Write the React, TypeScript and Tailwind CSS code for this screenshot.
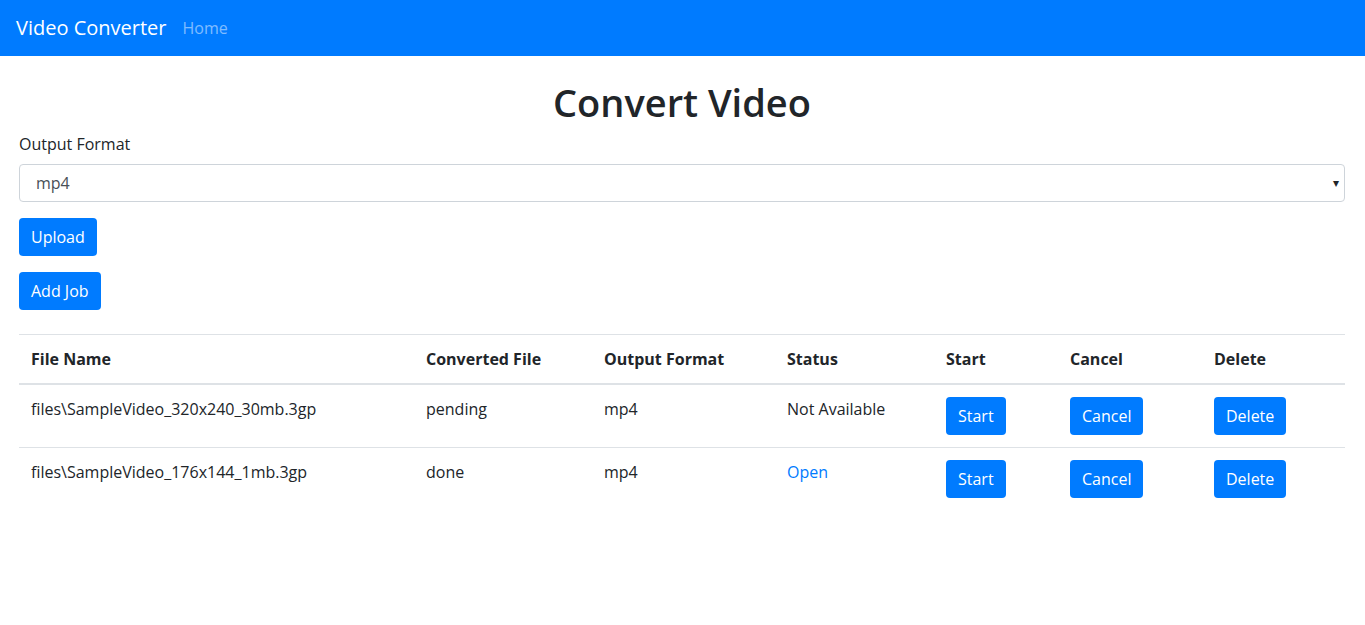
import React from 'react';

interface Job {
  fileName: string;
  converted: string;
  format: string;
  open: boolean;
}

const jobs: Job[] = [
  { fileName: 'files\\SampleVideo_320x240_30mb.3gp', converted: 'pending', format: 'mp4', open: false },
  { fileName: 'files\\SampleVideo_176x144_1mb.3gp', converted: 'done', format: 'mp4', open: true },
];

const btn =
  'h-[38px] px-3 rounded-[4px] bg-[#007bff] text-white text-base leading-6 hover:bg-[#0069d9]';

const App: React.FC = () => {
  return (
    <div className="min-h-screen bg-white text-[#212529] font-['Open_Sans',sans-serif] text-base leading-6">
      <nav className="h-14 bg-[#007bff] flex items-center px-4">
        <a className="text-white text-xl mr-4">Video Converter</a>
        <a className="text-white/50 text-base">Home</a>
      </nav>

      <div className="px-[19px] pr-[20px]">
        <h1 className="text-[38px] leading-[48px] font-semibold text-center mt-[22px] mb-[6px]">Convert Video</h1>

        <label className="block mb-2">Output Format</label>
        <div className="relative mb-4">
          <select className="w-full h-[38px] appearance-none border border-[#ced4da] rounded-[4px] pl-4 pr-8 text-[#495057] bg-white">
            <option>mp4</option>
          </select>
          <span className="absolute right-[6px] top-[7px] text-[12px] pointer-events-none">▾</span>
        </div>

        <div className="mb-4">
          <button className={btn}>Upload</button>
        </div>
        <div className="mb-6">
          <button className={btn}>Add Job</button>
        </div>

        <table className="w-full border-collapse text-left">
          <colgroup>
            <col className="w-[395px]" />
            <col className="w-[178px]" />
            <col className="w-[183px]" />
            <col className="w-[159px]" />
            <col className="w-[124px]" />
            <col className="w-[144px]" />
            <col className="w-[143px]" />
          </colgroup>
          <thead>
            <tr className="border-t border-[#dee2e6] border-b-2">
              {['File Name', 'Converted File', 'Output Format', 'Status', 'Start', 'Cancel', 'Delete'].map((h) => (
                <th key={h} className="p-3 font-bold align-bottom">{h}</th>
              ))}
            </tr>
          </thead>
          <tbody>
            {jobs.map((job, i) => (
              <tr key={i} className={i > 0 ? 'border-t border-[#dee2e6]' : ''}>
                <td className="p-3 align-top">{job.fileName}</td>
                <td className="p-3 align-top">{job.converted}</td>
                <td className="p-3 align-top">{job.format}</td>
                <td className="p-3 align-top">
                  {job.open ? <a className="text-[#007bff]">Open</a> : 'Not Available'}
                </td>
                <td className="p-3 align-top"><button className={btn}>Start</button></td>
                <td className="p-3 align-top"><button className={btn}>Cancel</button></td>
                <td className="p-3 align-top"><button className={btn}>Delete</button></td>
              </tr>
            ))}
          </tbody>
        </table>
      </div>
    </div>
  );
};

export default App;
